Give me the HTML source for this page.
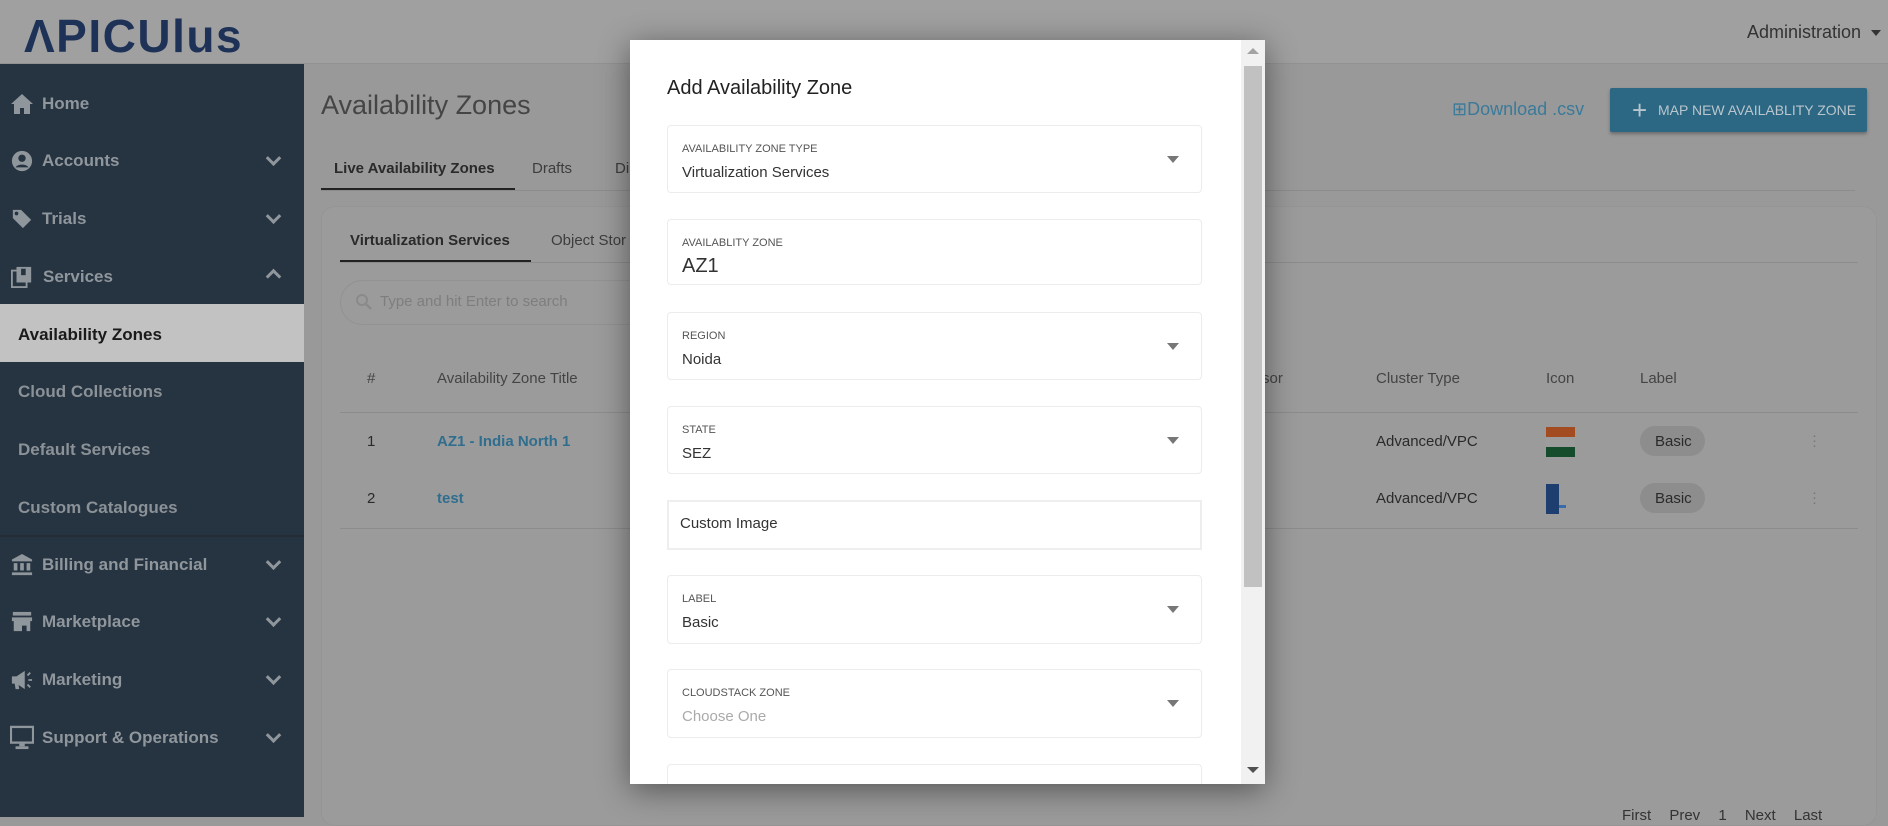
<!DOCTYPE html>
<html><head><meta charset="utf-8"><style>
*{margin:0;padding:0;box-sizing:border-box}
body{width:1888px;height:817px;overflow:hidden;background:#999;font-family:"Liberation Sans",sans-serif;position:relative}
.a{position:absolute;white-space:nowrap}
#hdr{left:0;top:0;width:1888px;height:64px;background:#a0a0a0;border-bottom:1px solid #929292}
#sb{left:0;top:64px;width:304px;height:753px;background:#263340}
.si{position:absolute;left:42px;font-size:17px;font-weight:bold;color:#8f969c;transform:translateY(-50%)}
.sub{position:absolute;left:18px;font-size:17px;font-weight:bold;color:#8a9197;transform:translateY(-50%)}
.chev{position:absolute;left:268px;width:11px;height:11px;border-right:3px solid #8f969c;border-bottom:3px solid #8f969c;transform:translateY(-75%) rotate(45deg)}
.ic{position:absolute;left:10px;width:24px;height:22px;transform:translateY(-50%)}
.t{color:#3d3d3d}
.fld{position:absolute;left:37px;width:535px;border:1px solid #ececec;border-radius:4px;background:#fff}
.fl{position:absolute;left:14px;top:17px;font-size:11px;color:#555}
.fv{position:absolute;left:14px;top:38px;font-size:15px;color:#333}
.ar{position:absolute;left:499px;width:0;height:0;border-left:6px solid transparent;border-right:6px solid transparent;border-top:7px solid #777}
</style></head><body>
<div id="hdr" class="a"></div>
<div class="a" style="left:24px;top:9px;font-size:46px;font-weight:bold;color:#1e3156;letter-spacing:1.5px">ΛPICUlus</div>
<div class="a" style="left:1747px;top:22px;font-size:18px;color:#333">Administration</div>
<div class="a" style="left:1871px;top:30px;border-left:5px solid transparent;border-right:5px solid transparent;border-top:6px solid #333"></div>

<div id="sb" class="a">
 <div class="a" style="left:0;top:240px;width:304px;height:1px;background:#212c37"></div>
 <div class="a" style="left:0;top:471px;width:304px;height:2px;background:#222d38"></div>
 <div class="a" style="left:0;top:240px;width:304px;height:58px;background:#c2c2c2"></div>
 <svg class="ic" style="top:40px" viewBox="0 0 24 22"><path d="M12 1L1 11h3v10h6v-6h4v6h6V11h3z" fill="#8f969c"/></svg>
 <div class="si" style="top:40px">Home</div>
 <svg class="ic" style="top:97px" viewBox="0 0 24 24"><circle cx="12" cy="12" r="11" fill="#8f969c"/><circle cx="12" cy="9" r="4" fill="#263340"/><path d="M5 19c2-4 12-4 14 0" fill="#263340"/></svg>
 <div class="si" style="top:97px">Accounts</div><div class="chev" style="top:97px"></div>
 <svg class="ic" style="top:155px" viewBox="0 0 24 24"><path d="M2 2h9l11 11-9 9L2 11z" fill="#8f969c"/><circle cx="6" cy="6" r="2" fill="#263340"/></svg>
 <div class="si" style="top:155px">Trials</div><div class="chev" style="top:155px"></div>
 <svg class="ic" style="top:213px" viewBox="0 0 24 24"><rect x="1" y="5" width="16" height="18" fill="none" stroke="#8f969c" stroke-width="2"/><rect x="6" y="1" width="16" height="17" fill="#8f969c"/><rect x="11" y="3" width="5" height="7" fill="#263340"/></svg>
 <div class="si" style="top:213px;left:43px">Services</div>
 <div class="a" style="left:268px;top:207px;width:11px;height:11px;border-left:3px solid #8f969c;border-top:3px solid #8f969c;transform:rotate(45deg)"></div>
 <div class="sub" style="top:271px;color:#1a1a1a">Availability Zones</div>
 <div class="sub" style="top:328px">Cloud Collections</div>
 <div class="sub" style="top:386px">Default Services</div>
 <div class="sub" style="top:444px">Custom Catalogues</div>
 <svg class="ic" style="top:501px" viewBox="0 0 24 24"><path d="M12 0L1 6v2h22V6z M3 10h4v8H3z M10 10h4v8h-4z M17 10h4v8h-4z M1 20h22v3H1z" fill="#8f969c"/></svg>
 <div class="si" style="top:501px">Billing and Financial</div><div class="chev" style="top:501px"></div>
 <svg class="ic" style="top:558px" viewBox="0 0 24 24"><rect x="2" y="1" width="20" height="4" fill="#8f969c"/><path d="M1 7h22v4H1z M3 11h18v11h-4v-6h-5v6H3z" fill="#8f969c"/></svg>
 <div class="si" style="top:558px">Marketplace</div><div class="chev" style="top:558px"></div>
 <svg class="ic" style="top:616px" viewBox="0 0 24 24"><path d="M1 8h5l9-6v20l-9-6H1z M4 16h4l1 6H5z" fill="#8f969c"/><path d="M18 7l3-3M19 12h4M18 17l3 3" stroke="#8f969c" stroke-width="2"/></svg>
 <div class="si" style="top:616px">Marketing</div><div class="chev" style="top:616px"></div>
 <svg class="ic" style="top:674px;height:26px" viewBox="0 0 26 26"><rect x="1" y="1" width="24" height="17" fill="none" stroke="#8f969c" stroke-width="2.5"/><rect x="10" y="19" width="6" height="3" fill="#8f969c"/><rect x="6" y="22" width="14" height="3" fill="#8f969c"/></svg>
 <div class="si" style="top:674px">Support &amp; Operations</div><div class="chev" style="top:674px"></div>
</div>

<div class="a t" style="left:321px;top:90px;font-size:27px;color:#454545">Availability Zones</div>
<div class="a" style="left:1452px;top:99px;font-size:18px;color:#3a7a9a">⊞Download .csv</div>
<div class="a" style="left:1610px;top:88px;width:257px;height:44px;background:#2c6783;border-radius:2px;box-shadow:0 2px 3px rgba(0,0,0,.3)"></div>
<div class="a" style="left:1632px;top:95px;font-size:26px;color:#b9c6cd">+</div>
<div class="a" style="left:1658px;top:102px;font-size:14px;color:#b9c6cd">MAP NEW AVAILABLITY ZONE</div>

<div class="a" style="left:321px;top:190px;width:1534px;height:1px;background:#8c8c8c"></div>
<div class="a" style="left:334px;top:160px;font-size:15px;font-weight:bold;color:#2a2a2a">Live Availability Zones</div>
<div class="a" style="left:321px;top:188px;width:194px;height:2px;background:#222"></div>
<div class="a" style="left:532px;top:160px;font-size:15px;color:#3d3d3d">Drafts</div>
<div class="a" style="left:615px;top:160px;font-size:15px;color:#3d3d3d">Di</div>

<div class="a" style="left:321px;top:206px;width:1556px;height:620px;background:#9b9b9b;border-radius:14px;border:1px solid #959595"></div>
<div class="a" style="left:340px;top:262px;width:1518px;height:1px;background:#8c8c8c"></div>
<div class="a" style="left:350px;top:232px;font-size:15px;font-weight:bold;color:#2a2a2a">Virtualization Services</div>
<div class="a" style="left:340px;top:260px;width:191px;height:2px;background:#222"></div>
<div class="a" style="left:551px;top:232px;font-size:15px;color:#3d3d3d">Object Stor</div>
<div class="a" style="left:340px;top:280px;width:320px;height:45px;border:1px solid #929292;border-radius:23px"></div>
<svg class="a" style="left:355px;top:293px" width="18" height="18" viewBox="0 0 18 18"><circle cx="7" cy="7" r="5" fill="none" stroke="#8a8a8a" stroke-width="2"/><path d="M11 11l5 5" stroke="#8a8a8a" stroke-width="2.5"/></svg>
<div class="a" style="left:380px;top:293px;font-size:15px;color:#7e7e7e">Type and hit Enter to search</div>

<div class="a" style="left:367px;top:370px;font-size:15px;color:#444">#</div>
<div class="a" style="left:437px;top:370px;font-size:15px;color:#444">Availability Zone Title</div>
<div class="a" style="left:1262px;top:370px;font-size:15px;color:#444">sor</div>
<div class="a" style="left:1376px;top:370px;font-size:15px;color:#444">Cluster Type</div>
<div class="a" style="left:1546px;top:370px;font-size:15px;color:#444">Icon</div>
<div class="a" style="left:1640px;top:370px;font-size:15px;color:#444">Label</div>
<div class="a" style="left:340px;top:412px;width:1518px;height:1px;background:#8c8c8c"></div>
<div class="a" style="left:367px;top:433px;font-size:15px;color:#2a2a2a">1</div>
<div class="a" style="left:437px;top:433px;font-size:15px;font-weight:bold;color:#2f6e8e">AZ1 - India North 1</div>
<div class="a" style="left:1376px;top:433px;font-size:15px;color:#2a2a2a">Advanced/VPC</div>
<div class="a" style="left:1546px;top:427px;width:29px;height:10px;background:#a34c22"></div>
<div class="a" style="left:1546px;top:437px;width:29px;height:10px;background:#9d9d9d"></div>
<div class="a" style="left:1546px;top:447px;width:29px;height:10px;background:#144c2c"></div>
<div class="a" style="left:1640px;top:426px;width:65px;height:30px;border-radius:15px;background:#8d8d8d"></div>
<div class="a" style="left:1655px;top:433px;font-size:15px;color:#2a2a2a">Basic</div>
<div class="a" style="left:1812px;top:433px;font-size:15px;color:#777;line-height:5px;width:4px">·<br>·<br>·</div>
<div class="a" style="left:367px;top:490px;font-size:15px;color:#2a2a2a">2</div>
<div class="a" style="left:437px;top:490px;font-size:15px;font-weight:bold;color:#2f6e8e">test</div>
<div class="a" style="left:1376px;top:490px;font-size:15px;color:#2a2a2a">Advanced/VPC</div>
<div class="a" style="left:1546px;top:484px;width:13px;height:30px;background:#1d3e6e"></div>
<div class="a" style="left:1559px;top:505px;width:7px;height:3px;background:#3a6aa8"></div>
<div class="a" style="left:1640px;top:483px;width:65px;height:30px;border-radius:15px;background:#8d8d8d"></div>
<div class="a" style="left:1655px;top:490px;font-size:15px;color:#2a2a2a">Basic</div>
<div class="a" style="left:1812px;top:490px;font-size:15px;color:#777;line-height:5px;width:4px">·<br>·<br>·</div>
<div class="a" style="left:340px;top:528px;width:1518px;height:1px;background:#8c8c8c"></div>
<div class="a" style="left:1622px;top:807px;font-size:15px;color:#333;word-spacing:14px">First Prev 1 Next Last</div>

<div class="a" style="left:630px;top:40px;width:635px;height:744px;background:#fff;box-shadow:0 6px 30px rgba(0,0,0,.45);overflow:hidden">
 <div class="a" style="left:611px;top:0;width:24px;height:744px;background:#f1f1f1"></div>
 <div class="a" style="left:614px;top:26px;width:18px;height:521px;background:#c1c1c1"></div>
 <div class="a" style="left:617px;top:8px;border-left:6px solid transparent;border-right:6px solid transparent;border-bottom:6px solid #a3a3a3"></div>
 <div class="a" style="left:617px;top:727px;border-left:6px solid transparent;border-right:6px solid transparent;border-top:6px solid #505050"></div>
 <div class="a" style="left:37px;top:37px;font-size:20px;color:#222">Add Availability Zone</div>
 <div class="fld" style="top:85px;height:68px"><div class="fl">AVAILABILITY ZONE TYPE</div><div class="fv">Virtualization Services</div><div class="ar" style="top:30px"></div></div>
 <div class="fld" style="top:179px;height:66px"><div class="fl">AVAILABLITY ZONE</div><div class="fv" style="top:35px;font-size:20px">AZ1</div></div>
 <div class="fld" style="top:272px;height:68px"><div class="fl">REGION</div><div class="fv">Noida</div><div class="ar" style="top:30px"></div></div>
 <div class="fld" style="top:366px;height:68px"><div class="fl">STATE</div><div class="fv">SEZ</div><div class="ar" style="top:30px"></div></div>
 <div class="fld" style="top:460px;height:50px;border:2px solid #eee;border-radius:0"><div class="fv" style="top:13px;left:11px">Custom Image</div></div>
 <div class="fld" style="top:535px;height:69px"><div class="fl">LABEL</div><div class="fv">Basic</div><div class="ar" style="top:30px"></div></div>
 <div class="fld" style="top:629px;height:69px"><div class="fl">CLOUDSTACK ZONE</div><div class="fv" style="color:#aaa">Choose One</div><div class="ar" style="top:30px"></div></div>
 <div class="fld" style="top:724px;height:60px"></div>
</div>
</body></html>
